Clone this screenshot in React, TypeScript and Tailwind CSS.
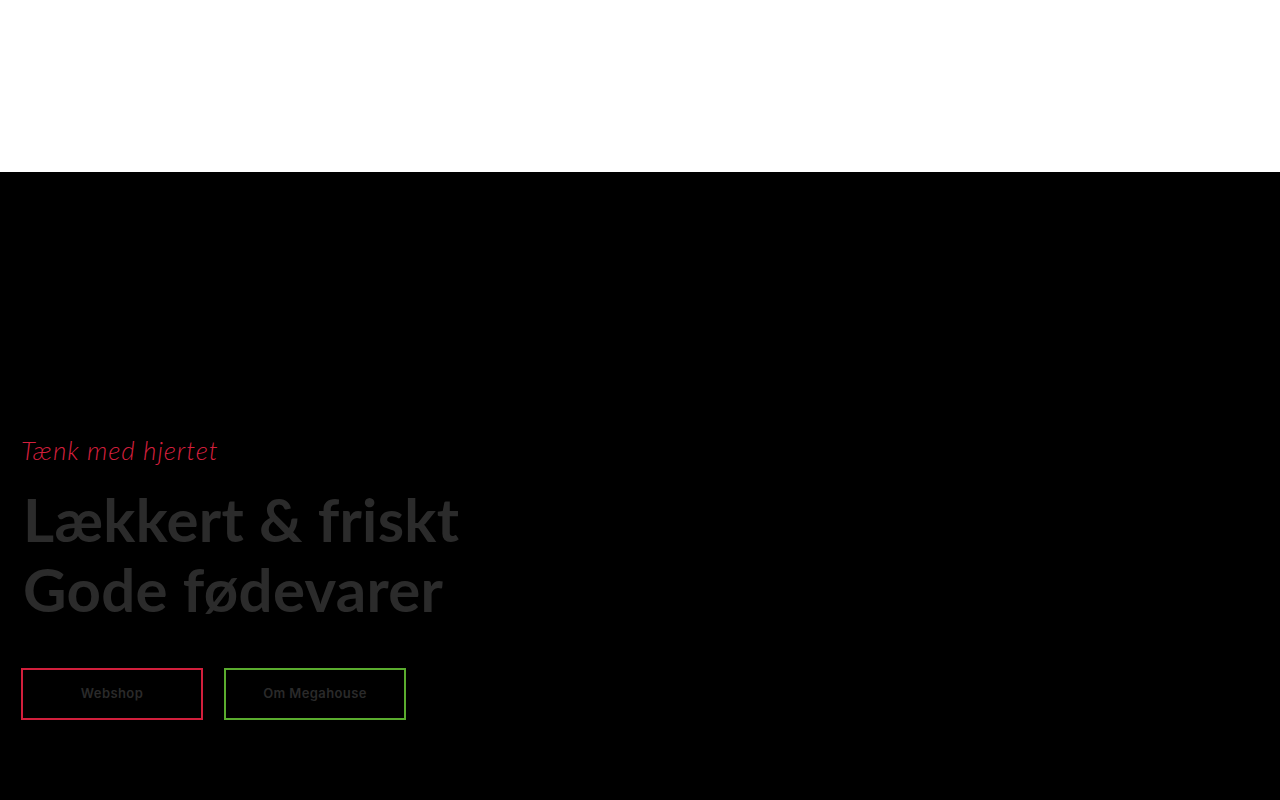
export default function App() {
  return (
    <div className="min-h-screen w-full bg-black">
      <header className="h-[172px] w-full bg-white" />
      <section className="flex h-[628px] flex-col justify-start bg-black px-[21px] pt-[258px]">
        <p
          className="text-[26px] font-light italic leading-[40px] tracking-[0.9px] text-[#d21f3c]"
          style={{ fontFamily: '"Lato", "Open Sans", sans-serif' }}
        >
          Tænk med hjertet
        </p>
        <h1
          className="mt-[14px] pl-[2px] text-[60px] font-bold leading-[70px] tracking-[0.3px] text-[#2b2b2b]"
          style={{ fontFamily: '"Lato", "Noto Sans", sans-serif' }}
        >
          Lækkert &amp; friskt
          <br />
          Gode fødevarer
        </h1>
        <div className="mt-[44px] flex gap-[21px]">
          <a
            href="#"
            className="flex h-[52px] w-[182px] items-center justify-center border-2 border-[#d21f3c] text-[13px] font-semibold tracking-[0.4px] text-[#2a2a2a]"
            style={{ fontFamily: '"Inter", "Open Sans", sans-serif' }}
          >
            Webshop
          </a>
          <a
            href="#"
            className="flex h-[52px] w-[182px] items-center justify-center border-2 border-[#5aac2e] text-[13px] font-semibold tracking-[0.4px] text-[#2a2a2a]"
            style={{ fontFamily: '"Inter", "Open Sans", sans-serif' }}
          >
            Om Megahouse
          </a>
        </div>
      </section>
    </div>
  );
}
